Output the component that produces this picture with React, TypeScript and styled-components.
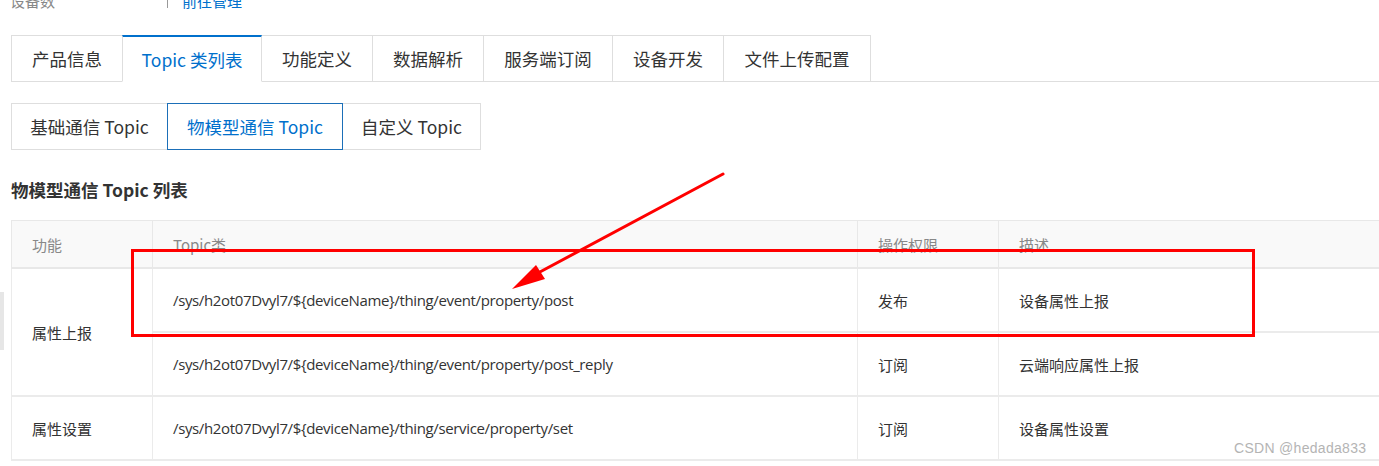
import React from "react";
import styled, { createGlobalStyle } from "styled-components";

const GlobalStyle = createGlobalStyle`
  html, body {
    margin: 0;
    padding: 0;
    background: #fff;
    overflow: hidden;
  }
  body {
    font-family: "Open Sans", "Noto Sans CJK SC", sans-serif;
    color: #333;
  }
`;

// widths include the 1px border shared with the next tab
const mainTabs = [
  { title: "产品信息", width: 112 },
  { title: "Topic 类列表", width: 140, active: true },
  { title: "功能定义", width: 112 },
  { title: "数据解析", width: 112 },
  { title: "服务端订阅", width: 130 },
  { title: "设备开发", width: 112 },
  { title: "文件上传配置", width: 148 },
];

const subTabs = [
  { title: "基础通信 Topic", width: 157 },
  { title: "物模型通信 Topic", width: 176, active: true },
  { title: "自定义 Topic", width: 139 },
];

const prefix = "/sys/h2ot07Dvyl7/${deviceName}/thing/";

const groups = [
  {
    name: "属性上报",
    rows: [
      { topic: prefix + "event/property/post", perm: "发布", desc: "设备属性上报" },
      { topic: prefix + "event/property/post_reply", perm: "订阅", desc: "云端响应属性上报" },
    ],
  },
  {
    name: "属性设置",
    rows: [{ topic: prefix + "service/property/set", perm: "订阅", desc: "设备属性设置" }],
  },
];

export default function App() {
  return (
    <>
      <GlobalStyle />
      <Page>
        <InfoRow>
          <InfoLabel>设备数</InfoLabel>
          <InfoDivider />
          <InfoLink>前往管理</InfoLink>
        </InfoRow>

        <MainTabBar>
          {mainTabs.map((t) => (
            <MainTab key={t.title} $width={t.width} $active={!!t.active}>
              {t.title}
            </MainTab>
          ))}
        </MainTabBar>

        <SubTabBar>
          {subTabs.map((t) => (
            <SubTab key={t.title} $width={t.width} $active={!!t.active}>
              {t.title}
            </SubTab>
          ))}
        </SubTabBar>

        <SectionTitle>物模型通信 Topic 列表</SectionTitle>

        <Table>
          <colgroup>
            <col style={{ width: 141 }} />
            <col style={{ width: 705 }} />
            <col style={{ width: 141 }} />
            <col />
          </colgroup>
          <thead>
            <tr>
              <HeadCell>功能</HeadCell>
              <HeadCell>Topic类</HeadCell>
              <HeadCell>操作权限</HeadCell>
              <HeadCell>描述</HeadCell>
            </tr>
          </thead>
          <tbody>
            {groups.map((g) =>
              g.rows.map((r, i) => (
                <tr key={r.topic}>
                  {i === 0 && <Cell rowSpan={g.rows.length}>{g.name}</Cell>}
                  <Cell $latin>{r.topic}</Cell>
                  <Cell>{r.perm}</Cell>
                  <Cell>{r.desc}</Cell>
                </tr>
              ))
            )}
          </tbody>
        </Table>
      </Page>

      <SideHandle />

      <Annotation width="1379" height="466" viewBox="0 0 1379 466">
        <rect x="132.5" y="250.5" width="1121" height="85" fill="none" stroke="#ff0000" strokeWidth="3" />
        <line x1="723" y1="174" x2="538" y2="273" stroke="#ff0000" strokeWidth="3" strokeLinecap="round" />
        <polygon points="512,289 536,265 545,279" fill="#ff0000" />
      </Annotation>

      <Watermark>CSDN @hedada833</Watermark>
    </>
  );
}

const Page = styled.div`
  width: 1400px;
  padding-left: 11px;
`;

const InfoRow = styled.div`
  display: flex;
  align-items: center;
  height: 20px;
  margin-top: -9px;
  font-size: 15px;
  line-height: 20px;
`;

const InfoLabel = styled.span`
  color: #888;
  margin-left: -1px;
  width: 157px;
`;

const InfoDivider = styled.span`
  display: inline-block;
  width: 1px;
  height: 14px;
  background: #999;
  margin-right: 14px;
`;

const InfoLink = styled.span`
  color: #0070cc;
`;

const MainTabBar = styled.div`
  display: flex;
  margin-top: 24px;
  border-bottom: 1px solid #dedede;
`;

const MainTab = styled.div<{ $width: number; $active: boolean }>`
  box-sizing: border-box;
  width: ${(p) => p.$width}px;
  height: 47px;
  margin-bottom: -1px;
  margin-right: -1px;
  display: flex;
  align-items: center;
  justify-content: center;
  font-family: "Noto Sans CJK SC", sans-serif;
  font-size: 17.5px;
  color: ${(p) => (p.$active ? "#0070cc" : "#333")};
  background: #fff;
  border: 1px solid #dedede;
  border-top: ${(p) => (p.$active ? "2px solid #0070cc" : "1px solid #dedede")};
  border-bottom-color: ${(p) => (p.$active ? "#fff" : "#dedede")};
  position: relative;
  z-index: ${(p) => (p.$active ? 1 : 0)};
`;

const SubTabBar = styled.div`
  display: flex;
  margin-top: 21px;
`;

const SubTab = styled.div<{ $width: number; $active: boolean }>`
  box-sizing: border-box;
  width: ${(p) => p.$width}px;
  height: 47px;
  margin-right: -1px;
  display: flex;
  align-items: center;
  justify-content: center;
  font-family: "Noto Sans CJK SC", sans-serif;
  font-size: 17.5px;
  color: ${(p) => (p.$active ? "#0070cc" : "#333")};
  border: 1px solid ${(p) => (p.$active ? "#1b6fb8" : "#dedede")};
  position: relative;
  z-index: ${(p) => (p.$active ? 1 : 0)};
`;

const SectionTitle = styled.div`
  margin-top: 28px;
  height: 24px;
  line-height: 24px;
  font-family: "Noto Sans CJK SC", sans-serif;
  font-size: 17.5px;
  font-weight: 700;
  color: #333;
`;

const Table = styled.table`
  margin-top: 18px;
  width: 1390px;
  border-collapse: collapse;
  table-layout: fixed;
  font-size: 15px;
`;

const HeadCell = styled.th`
  height: 46px;
  padding: 0 0 0 20px;
  text-align: left;
  font-weight: 400;
  color: #888;
  background: #f9f9f9;
  border: 1px solid #e8e8e8;
  border-bottom: 2px solid #e8e8e8;
  font-family: "Noto Sans CJK SC", sans-serif;
`;

const Cell = styled.td<{ $latin?: boolean }>`
  height: 62px;
  padding: 0 0 0 20px;
  text-align: left;
  color: #333;
  background: #fff;
  border: 1px solid #ebebeb;
  border-bottom: 2px solid #ebebeb;
  white-space: nowrap;
  letter-spacing: ${(p) => (p.$latin ? "-0.36px" : "0")};
`;

const SideHandle = styled.div`
  position: absolute;
  left: 0;
  top: 292px;
  width: 4px;
  height: 58px;
  background: #e6e6e6;
`;

const Annotation = styled.svg`
  position: absolute;
  left: 0;
  top: 0;
  pointer-events: none;
`;

const Watermark = styled.div`
  position: absolute;
  left: 1234px;
  top: 440px;
  font-family: "Liberation Sans", sans-serif;
  font-size: 14px;
  color: #b4b4b4;
  letter-spacing: 0.3px;
`;
